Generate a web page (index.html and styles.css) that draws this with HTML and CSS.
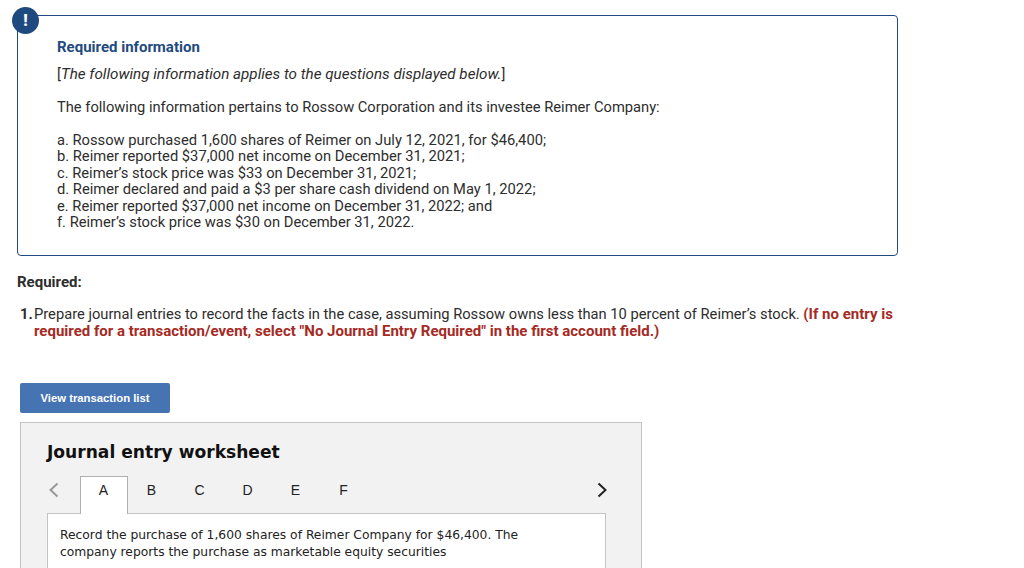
FILE: index.html
```html
<!DOCTYPE html>
<html lang="en">
<head>
<meta charset="utf-8">
<title>Required information</title>
<link rel="stylesheet" href="styles.css">
</head>
<body>
<main class="page">
  <section class="info">
    <span class="alert">!</span>
    <h2 class="info-title">Required information</h2>
    <p class="info-note">[<em>The following information applies to the questions displayed below.</em>]</p>
    <p class="info-lead">The following information pertains to Rossow Corporation and its investee Reimer Company:</p>
    <ul class="facts">
      <li>a. Rossow purchased 1,600 shares of Reimer on July 12, 2021, for $46,400;</li>
      <li>b. Reimer reported $37,000 net income on December 31, 2021;</li>
      <li>c. Reimer’s stock price was $33 on December 31, 2021;</li>
      <li>d. Reimer declared and paid a $3 per share cash dividend on May 1, 2022;</li>
      <li>e. Reimer reported $37,000 net income on December 31, 2022; and</li>
      <li>f. Reimer’s stock price was $30 on December 31, 2022.</li>
    </ul>
  </section>
  <h3 class="required">Required:</h3>
  <div class="question">
    <span class="q-num">1.</span>
    <p class="q-text">Prepare journal entries to record the facts in the case, assuming Rossow owns less than 10 percent of Reimer’s stock. <strong class="q-warn">(If no entry is required for a transaction/event, select "No Journal Entry Required" in the first account field.)</strong></p>
  </div>
  <button class="view-btn" type="button">View transaction list</button>
  <section class="sheet">
    <h2 class="sheet-title">Journal entry worksheet</h2>
    <div class="tabs">
      <svg class="chev" width="12" height="16" viewBox="0 0 12 16"><path d="M9.500 1.500 2.500 8l7 6.500" fill="none" stroke="#999" stroke-width="2"/></svg>
      <span class="tab active">A</span>
      <span class="tab">B</span>
      <span class="tab">C</span>
      <span class="tab">D</span>
      <span class="tab">E</span>
      <span class="tab">F</span>
      <svg class="chev next" width="12" height="16" viewBox="0 0 12 16"><path d="M2.500 1.500 9.500 8l-7 6.500" fill="none" stroke="#222" stroke-width="2"/></svg>
    </div>
    <div class="panel">Record the purchase of 1,600 shares of Reimer Company for $46,400. The company reports the purchase as marketable equity securities</div>
  </section>
</main>
</body>
</html>
```
FILE: styles.css
```css
* { box-sizing: border-box; }
html, body { margin: 0; height: 100%; overflow: hidden; background: #fff; }
body { font-family: "Roboto", "Liberation Sans", sans-serif; color: #2d2d2d; font-size: 14.700px; }
.page { padding: 15px 0 0 17px; display: flex; flex-direction: column; align-items: flex-start; }
.info { position: relative; width: 881px; height: 241px; border: 1px solid #1f4a80; border-radius: 4px; padding: 23px 0 0 39px; }
.alert { position: absolute; left: -6px; top: -9px; width: 27px; height: 27px; border-radius: 50%; background: #1f4a80; color: #fff; font-weight: 900; font-size: 16px; line-height: 27px; text-align: center; }
.info-title { margin: 0; font-size: 15px; line-height: 17px; font-weight: 700; color: #1f4a80; }
.info-note { margin: 9px 0 0; line-height: 18px; }
.info-note em { font-size: 15.200px; }
.info-lead { margin: 15px 0 0; line-height: 18px; }
.facts { list-style: none; margin: 15.500px 0 0; padding: 0; font-size: 14.720px; line-height: 16.500px; }
.required { margin: 17px 0 0; font-size: 15px; line-height: 18px; font-weight: 700; color: #2d2d2d; }
.question { display: flex; margin: 15px 0 0 3px; line-height: 17px; width: 878px; }
.q-num { width: 14px; font-weight: 700; flex: none; }
.q-text { margin: 0; }
.q-warn { color: #a52a24; font-weight: 700; font-size: 15px; }
.view-btn { margin: 43px 0 0 3px; width: 150px; height: 30px; border: 0; border-radius: 2px; background: #4674b3; color: #fff; font: 700 11.300px/30px "Liberation Sans", Arial, sans-serif; padding: 0; }
.sheet { margin: 9px 0 0 3px; width: 622px; height: 200px; border: 1px solid #c4c4c4; background: #f2f2f2; padding: 17px 36px 0 26px; }
.sheet-title { margin: 0; font: 700 17.100px/24px "DejaVu Sans", Verdana, sans-serif; color: #111; }
.tabs { position: relative; display: flex; margin-top: 12px; height: 37px; padding-left: 33px; z-index: 1; }
.chev { position: absolute; left: 1px; top: 6px; }
.chev.next { left: auto; right: -3px; }
.tab { width: 48px; height: 38px; padding-right: 1px; text-align: center; font: 14px/28px "Liberation Sans", Arial, sans-serif; color: #222; }
.tab.active { background: #fff; border: 1px solid #b0b0b0; border-bottom: 0; line-height: 27px; }
.panel { width: 559px; height: 120px; background: #fff; border: 1px solid #c4c4c4; padding: 13px 70px 0 12px; font: 12.300px/17px "DejaVu Sans", Verdana, sans-serif; color: #222; }
```
